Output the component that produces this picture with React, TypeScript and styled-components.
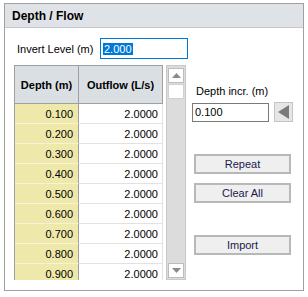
import React from "react";
import styled, { createGlobalStyle } from "styled-components";

const Global = createGlobalStyle`
    body {
        margin:0;
        background:#fff;
        font-family:"Liberation Sans", Arial, sans-serif;
        font-size:11px;
        color:#000;
    }
`;

const Panel = styled.div`
    box-sizing:border-box;
    margin:3px 0 0 4px;
    width:300px;
    height:288px;
    border:1px solid #a0a0a0;
    display:flex;
    flex-direction:column;
`;

const Header = styled.div`
    height:23px;
    display:flex;
    align-items:center;
    padding-left:7px;
    background:#dfe3e8;
    border-bottom:1px solid #c4c8cc;
    font-weight:bold;
    font-size:12px;
`;

const Body = styled.div`
    padding:10px 0 0 9px;
`;

const Row = styled.div`
    display:flex;
    align-items:center;
`;

const Label = styled.span`
    margin-left:3px;
    width:83px;
`;

const Input = styled.div<{ $focus?: boolean }>`
    box-sizing:border-box;
    display:flex;
    align-items:center;
    padding-left:2px;
    background:#fff;
    border:1px solid ${(p) => (p.$focus ? "#0078d7" : "#7a7a7a")};
`;

const Selected = styled.span`
    background:#0078d7;
    color:#fff;
    padding:0 1px;
`;

const Main = styled.div`
    display:flex;
    margin-top:6px;
`;

const Grid = styled.div`
    box-sizing:border-box;
    width:149px;
    height:215px;
    overflow:hidden;
    border-left:1px solid #a0a0a0;
    border-top:1px solid #a0a0a0;
`;

const GridRow = styled.div<{ $head?: boolean }>`
    display:flex;
    height:${(p) => (p.$head ? "38px" : "20px")};
`;

const Cell = styled.div<{ $kind: "head" | "depth" | "flow"; $w: number }>`
    box-sizing:border-box;
    width:${(p) => p.$w}px;
    display:flex;
    align-items:center;
    justify-content:${(p) => (p.$kind === "head" ? "center" : "flex-end")};
    padding-right:${(p) => (p.$kind === "head" ? 0 : p.$kind === "depth" ? 5 : 4)}px;
    font-weight:${(p) => (p.$kind === "head" ? "bold" : "normal")};
    font-size:11px;
    background:${(p) => (p.$kind === "head" ? "#dadfe4" : p.$kind === "depth" ? "#eee8aa" : "#fff")};
    border-right:1px solid ${(p) => (p.$kind === "flow" ? "#e2e2e2" : "#a0a0a0")};
    border-bottom:1px solid ${(p) => (p.$kind === "head" ? "#a0a0a0" : p.$kind === "depth" ? "#f6f3d8" : "#e2e2e2")};
    white-space:nowrap;
`;

const Scroll = styled.div`
    box-sizing:border-box;
    margin-left:3px;
    width:20px;
    height:215px;
    display:flex;
    flex-direction:column;
    padding:2px 1px 1px 1px;
    background:#dcdcdc;
    border:1px solid #c8c8c8;
`;

const ScrollBtn = styled.div`
    box-sizing:border-box;
    height:15px;
    background:#fff;
    border:1px solid #bcbcbc;
    display:flex;
    align-items:center;
    justify-content:center;
`;

const Thumb = styled.div`
    box-sizing:border-box;
    height:15px;
    margin-top:1px;
    background:#fff;
    border:1px solid #d0d0d0;
`;

const Spacer = styled.div`
    flex:1;
`;

const Side = styled.div`
    margin-left:6px;
    padding-top:19px;
    display:flex;
    flex-direction:column;
`;

const SideLabel = styled.div`
    margin-left:4px;
    line-height:14px;
`;

const IncrRow = styled.div`
    display:flex;
    align-items:center;
    gap:5px;
    margin-top:4px;
`;

const ArrowBtn = styled.div`
    box-sizing:border-box;
    width:19px;
    height:20px;
    background:#e6e6e6;
    border:1px solid #c4c4c4;
    display:flex;
    align-items:center;
    justify-content:center;
`;

const Button = styled.div<{ $gap: number }>`
    box-sizing:border-box;
    margin:${(p) => p.$gap}px 0 0 2px;
    width:97px;
    height:20px;
    background:#efefef;
    border:2px solid #b8b8b8;
    color:#1a1a50;
    display:flex;
    align-items:center;
    justify-content:center;
`;

const depths = ["0.100", "0.200", "0.300", "0.400", "0.500", "0.600", "0.700", "0.800", "0.900"];

function Tri({ dir }: { dir: "up" | "down" }) {
    return (
        <svg width="9" height="5" viewBox="0 0 9 5">
            <polygon points={dir === "up" ? "0,5 9,5 4.5,0" : "0,0 9,0 4.5,5"} fill="#8a8a8a" />
        </svg>
    );
}

export default function App() {
    return (
        <>
            <Global />
            <Panel>
                <Header>Depth / Flow</Header>
                <Body>
                    <Row>
                        <Label>Invert Level (m)</Label>
                        <Input $focus style={{ width: 88, height: 21 }}>
                            <Selected>2.000</Selected>
                        </Input>
                    </Row>
                    <Main>
                        <Grid>
                            <GridRow $head>
                                <Cell $kind="head" $w={64}>Depth (m)</Cell>
                                <Cell $kind="head" $w={84}>Outflow (L/s)</Cell>
                            </GridRow>
                            {depths.map((d) => (
                                <GridRow key={d}>
                                    <Cell $kind="depth" $w={64}>{d}</Cell>
                                    <Cell $kind="flow" $w={84}>2.0000</Cell>
                                </GridRow>
                            ))}
                        </Grid>
                        <Scroll>
                            <ScrollBtn><Tri dir="up" /></ScrollBtn>
                            <Thumb />
                            <Spacer />
                            <ScrollBtn><Tri dir="down" /></ScrollBtn>
                        </Scroll>
                        <Side>
                            <SideLabel>Depth incr. (m)</SideLabel>
                            <IncrRow>
                                <Input style={{ width: 77, height: 19 }}>0.100</Input>
                                <ArrowBtn>
                                    <svg width="11" height="14" viewBox="0 0 11 14">
                                        <polygon points="11,0 11,14 0,7" fill="#7a7a7a" />
                                    </svg>
                                </ArrowBtn>
                            </IncrRow>
                            <Button $gap={32}>Repeat</Button>
                            <Button $gap={9}>Clear All</Button>
                            <Button $gap={32}>Import</Button>
                        </Side>
                    </Main>
                </Body>
            </Panel>
        </>
    );
}
